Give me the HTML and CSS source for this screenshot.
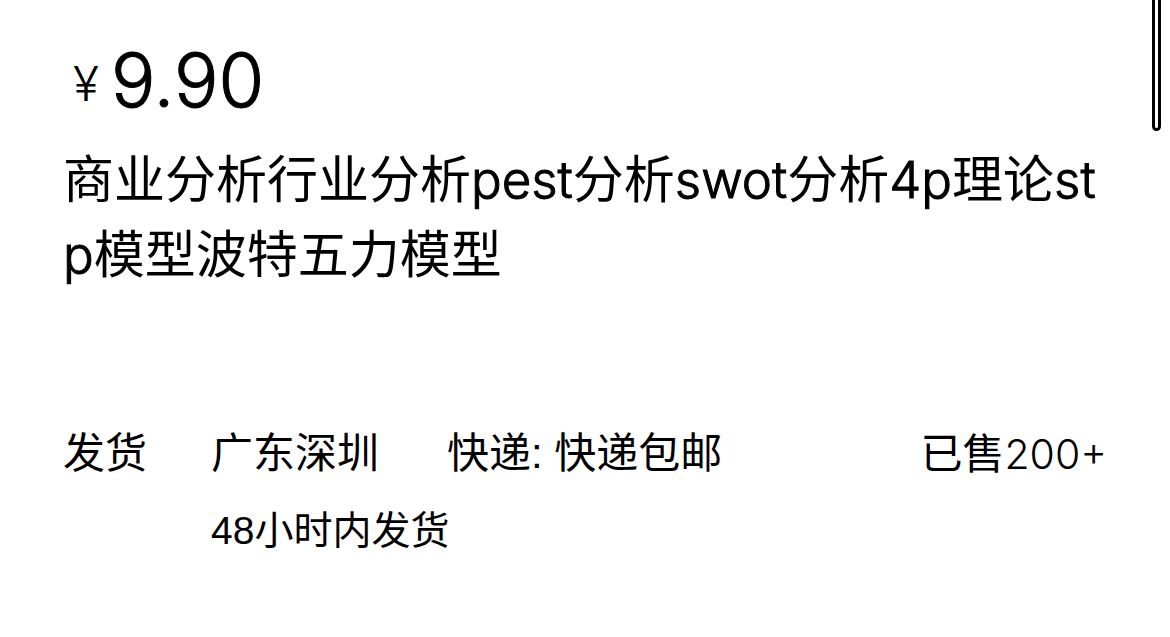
FILE: index.html
```html
<!DOCTYPE html>
<html lang="zh-CN">
<head>
<meta charset="utf-8">
<meta name="viewport" content="width=device-width, initial-scale=1">
<title>商品详情</title>
<link rel="stylesheet" href="styles.css">
</head>
<body>
<main class="product">
  <p class="price"><span class="currency">¥</span><span class="amount">9.90</span></p>
  <h1 class="title">商业分析行业分析<span class="latin">pest</span>分析<span class="latin">swot</span>分析<span class="latin">4p</span>理论<span class="latin">stp</span>模型波特五力模型</h1>
  <section class="shipping">
    <span class="label">发货</span>
    <div class="details">
      <div class="row">
        <span>广东深圳</span>
        <span class="courier">快递: 快递包邮</span>
        <span class="sold">已售<span class="count">200+</span></span>
      </div>
      <p class="promise">48小时内发货</p>
    </div>
  </section>
</main>
<div class="scroll-thumb" aria-hidden="true"></div>
</body>
</html>
```

FILE: styles.css
```css
* {
  box-sizing: border-box;
}

body {
  margin: 0;
  background: #fff;
  color: #000;
  font-family: "Liberation Sans", "Noto Sans CJK SC", sans-serif;
}

.product {
  padding: 28px 63px;
}

.price,
.latin,
.count {
  font-family: Inter, "Liberation Sans", sans-serif;
  font-weight: 300;
}

.price {
  display: flex;
  align-items: center;
  gap: 12px;
  margin: 0;
  padding-left: 10px;
  line-height: 96px;
}

.currency {
  padding-top: 8px;
  font-size: 48px;
}

.amount,
.latin {
  -webkit-text-stroke: 1px #000;
}

.amount {
  font-size: 74px;
}

.title {
  margin: 10px 0 0;
  font-family: Inter, "Noto Sans CJK SC", sans-serif;
  font-size: 51px;
  font-weight: 400;
  line-height: 75px;
  word-break: break-all;
}

.shipping {
  display: flex;
  gap: 64px;
  margin-top: 122px;
  font-size: 42px;
  line-height: 80px;
}

.details {
  flex: 1;
}

.row {
  display: flex;
}

.courier {
  margin-left: 68px;
}

.sold {
  margin-left: auto;
}

.count {
  font-size: 41px;
}

.promise {
  margin: 0;
  font-size: 39px;
  line-height: 72px;
}

.scroll-thumb {
  position: absolute;
  top: -8px;
  right: 9px;
  width: 9px;
  height: 139px;
  border: 3px solid #000;
  border-radius: 5px;
}
```
